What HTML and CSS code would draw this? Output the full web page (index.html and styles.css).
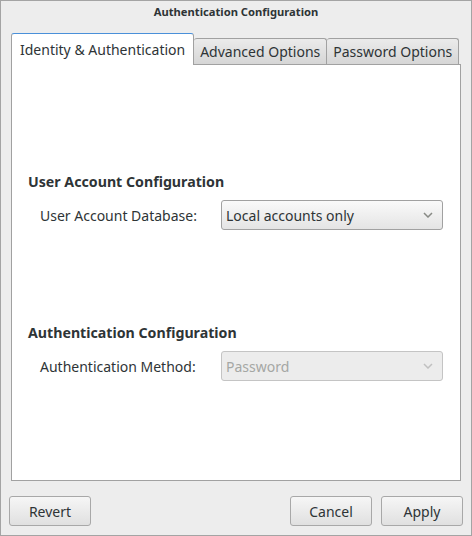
FILE: index.html
```html
<!DOCTYPE html>
<html lang="en">

<head>
    <meta charset="UTF-8">
    <meta name="viewport" content="width=device-width, initial-scale=1.0">
    <title>Authentication Configuration</title>
    <link rel="stylesheet" href="styles.css">
</head>

<body>
    <div class="window">
        <div class="titlebar">Authentication Configuration</div>

        <div class="notebook">
            <div class="tabs">
                <div class="tab active">Identity &amp; Authentication</div>
                <div class="tab">Advanced Options</div>
                <div class="tab">Password Options</div>
            </div>

            <div class="pane">
                <h3 class="section-title first">User Account Configuration</h3>
                <div class="row">
                    <label class="row-label">User Account Database:</label>
                    <div class="combo">
                        <span>Local accounts only</span>
                        <svg class="arrow" width="10" height="6" viewBox="0 0 10 6">
                            <path d="M1 1 L5 5 L9 1" fill="none" stroke="#888a85" stroke-width="1.5" />
                        </svg>
                    </div>
                </div>

                <h3 class="section-title second">Authentication Configuration</h3>
                <div class="row">
                    <label class="row-label">Authentication Method:</label>
                    <div class="combo disabled">
                        <span>Password</span>
                        <svg class="arrow" width="10" height="6" viewBox="0 0 10 6">
                            <path d="M1 1 L5 5 L9 1" fill="none" stroke="#c0c0c0" stroke-width="1.5" />
                        </svg>
                    </div>
                </div>
            </div>
        </div>

        <div class="footer">
            <button>Revert</button>
            <div class="spacer"></div>
            <button>Cancel</button>
            <button>Apply</button>
        </div>
    </div>
</body>

</html>
```

FILE: styles.css
```css
/* General Styles */
body {
    font-family: 'Noto Sans', 'Open Sans', sans-serif;
    font-size: 14px;
    color: #2e3436;
    margin: 0;
    background-color: #ededed;
}

.window {
    width: 472px;
    height: 536px;
    box-sizing: border-box;
    border: 1px solid #a4a4a4;
    background-color: #ededed;
    display: flex;
    flex-direction: column;
}

.titlebar {
    height: 24px;
    margin-bottom: 8px;
    line-height: 22px;
    text-align: center;
    font-size: 11.2px;
    font-weight: bold;
}

/* Tabs */
.notebook {
    margin: 0 10px;
}

.tabs {
    display: flex;
    align-items: flex-end;
    height: 31px;
    white-space: nowrap;
}

.tab {
    flex-shrink: 0;
    height: 25px;
    line-height: 26px;
    padding: 0 6px;
    border: 1px solid #a1a1a1;
    border-bottom: none;
    border-left: none;
    border-radius: 3px 3px 0 0;
    background: linear-gradient(#ebebeb, #d6d6d6);
    position: relative;
    top: -1px;
    margin-bottom: -1px;
}

.tab.active {
    height: 31px;
    line-height: 32px;
    padding: 0 8px;
    border-left: 1px solid #a1a1a1;
    border-top-color: #4a90d9;
    background: #fff;
    top: 0;
    margin-bottom: -1px;
    z-index: 1;
}

.pane {
    height: 417px;
    box-sizing: border-box;
    border: 1px solid #a1a1a1;
    background-color: #fff;
    padding: 109px 16px 0;
}

.section-title {
    margin: 0;
    font-size: 14.2px;
    line-height: 16px;
    font-weight: bold;
}

.section-title.second {
    margin-top: 95px;
}

.row {
    display: grid;
    grid-template-columns: 181px 222px;
    align-items: center;
    margin-top: 10px;
    padding-left: 12px;
}

.combo {
    height: 30px;
    box-sizing: border-box;
    border: 1px solid #a1a1a1;
    border-radius: 3px;
    background: linear-gradient(#fafafa, #e4e4e4);
    padding: 0 9px 0 4px;
    display: flex;
    align-items: center;
    justify-content: space-between;
}

.combo.disabled {
    background: #ececec;
    border-color: #c4c4c4;
    color: #a5a7a4;
}

/* Buttons */
.footer {
    display: flex;
    gap: 9px;
    padding: 15px 8px 0;
}

.spacer {
    flex: 1;
}

button {
    width: 82px;
    height: 30px;
    font-family: inherit;
    font-size: 14px;
    color: #2e3436;
    border: 1px solid #a8a8a8;
    border-radius: 3px;
    background: linear-gradient(#f6f6f6, #e0e0e0);
}
```
